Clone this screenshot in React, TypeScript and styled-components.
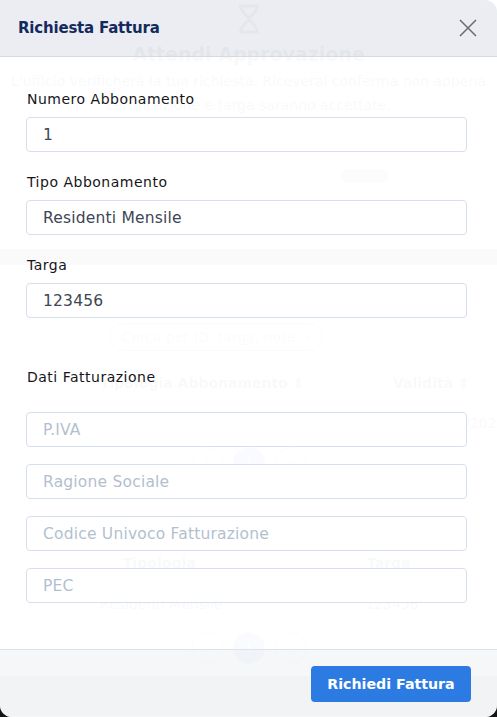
import React from 'react';
import styled, { createGlobalStyle } from 'styled-components';

const Global = createGlobalStyle`
  html, body { margin: 0; padding: 0; }
  body {
    background: linear-gradient(#ffffff 0 50%, #141414 50% 100%);
    font-family: "DejaVu Sans", "Noto Sans", sans-serif;
  }
  * { box-sizing: border-box; }
`;

const Shell = styled.div`
  position: relative;
  width: 497px;
  height: 717px;
  overflow: hidden;
  border-radius: 0 12px 12px 12px;
  background: #ffffff;
`;

/* ---------- faint page behind the translucent dialog ---------- */
const GhostPage = styled.div`
  position: absolute;
  inset: 0;
  display: flex;
  flex-direction: column;
  align-items: center;
  color: #1f2430;
  font-size: 14px;
  opacity: 0.5;
`;

const GhostIcon = styled.svg`
  margin-top: 4px;
  width: 26px;
  height: 30px;
`;

const GhostTitle = styled.div`
  margin-top: 7px;
  font-size: 19px;
  font-weight: 700;
  line-height: 26px;
`;

const GhostText = styled.div`
  width: 560px;
  text-align: center;
  line-height: 24px;
  margin-top: 2px;
`;

const GhostChip = styled.div`
  align-self: flex-end;
  margin: 52px 108px 0 0;
  width: 48px;
  height: 14px;
  border-radius: 7px;
  background: #8a8f99;
`;

const GhostBand = styled.div<{ $h: number; $top: number; $tone: string }>`
  align-self: stretch;
  height: ${(p) => p.$h}px;
  margin-top: ${(p) => p.$top}px;
  background: ${(p) => p.$tone};
`;

const GhostSearch = styled.div`
  margin-top: 58px;
  margin-right: 66px;
  width: 214px;
  height: 28px;
  border: 1px solid #6b7080;
  border-radius: 14px;
  display: flex;
  align-items: center;
  justify-content: space-between;
  padding: 0 10px 0 12px;
  color: #6b7080;
`;

const GhostRow = styled.div<{ $cols: string; $top: number; $bold?: boolean }>`
  align-self: stretch;
  display: grid;
  grid-template-columns: ${(p) => p.$cols};
  margin-top: ${(p) => p.$top}px;
  line-height: 20px;
  font-weight: ${(p) => (p.$bold ? 700 : 400)};
  white-space: nowrap;
  overflow: hidden;
`;

const GhostPager = styled.div<{ $top: number }>`
  margin-top: ${(p) => p.$top}px;
  display: flex;
  gap: 10px;
`;

const GhostDot = styled.div<{ $active?: boolean }>`
  width: 32px;
  height: 32px;
  border-radius: 50%;
  border: 1px solid #8a8f99;
  background: ${(p) => (p.$active ? '#2b6fd6' : 'transparent')};
  color: ${(p) => (p.$active ? '#fff' : '#555')};
  display: flex;
  align-items: center;
  justify-content: center;
  font-size: 12px;
`;

/* ---------- dialog ---------- */
const Dialog = styled.div`
  position: absolute;
  inset: 0;
  display: flex;
  flex-direction: column;
`;

const Header = styled.div`
  height: 57px;
  flex-shrink: 0;
  display: flex;
  align-items: center;
  justify-content: space-between;
  padding: 0 19px 0 18px;
  background: rgba(234, 236, 241, 0.93);
  border-bottom: 1px solid #d6d9e1;
`;

const Title = styled.h2`
  margin: 0;
  font-size: 15px;
  font-weight: 700;
  color: #152a5c;
  letter-spacing: -0.2px;
`;

const CloseButton = styled.button`
  border: 0;
  background: transparent;
  padding: 0;
  width: 20px;
  height: 20px;
  display: flex;
  align-items: center;
  justify-content: center;
  color: #6f6f72;
  cursor: pointer;
`;

const Body = styled.div`
  flex: 1;
  display: flex;
  flex-direction: column;
  padding: 32px 30px 0 26px;
  background: rgba(255, 255, 255, 0.94);
`;

const Fields = styled.div<{ $gap: number }>`
  display: flex;
  flex-direction: column;
  gap: ${(p) => p.$gap}px;
`;

const Field = styled.div`
  display: flex;
  flex-direction: column;
`;

const Label = styled.label<{ $space: number; $top?: number }>`
  margin: ${(p) => p.$top ?? 0}px 0 ${(p) => p.$space}px 1px;
  font-size: 14px;
  font-weight: 500;
  letter-spacing: 0.5px;
  line-height: 20px;
  color: #161618;
`;

const Input = styled.input`
  height: 35px;
  width: 100%;
  border: 1px solid #d6e0ec;
  border-radius: 4px;
  padding: 0 16px;
  font-family: inherit;
  font-size: 15.5px;
  letter-spacing: 0.2px;
  color: #3d4654;
  background: #ffffff;
  outline: none;
  &::placeholder {
    color: #b3bfcf;
  }
`;

const Footer = styled.div`
  flex-shrink: 0;
  display: flex;
  justify-content: flex-end;
  padding: 16px 26px 15px;
  background: rgba(245, 246, 248, 0.94);
  border-top: 1px solid #e0e2e7;
`;

const PrimaryButton = styled.button`
  width: 160px;
  height: 36px;
  border: 0;
  border-radius: 4px;
  background: #2c7be3;
  color: #ffffff;
  font-family: inherit;
  font-size: 14.2px;
  font-weight: 600;
  cursor: pointer;
`;

export default function App() {
  return (
    <>
      <Global />
      <Shell>
        <GhostPage aria-hidden>
          <GhostIcon viewBox="0 0 26 30">
            <path d="M3 2h20M3 28h20M5 2c0 8 8 10 8 13s-8 5-8 13M21 2c0 8-8 10-8 13s8 5 8 13" fill="none" stroke="#444" strokeWidth="3" />
          </GhostIcon>
          <GhostTitle>Attendi Approvazione</GhostTitle>
          <GhostText>
            L'ufficio verificherà la tua richiesta. Riceverai conferma non appena certificazione e targa saranno accettate.
          </GhostText>
          <GhostChip />
          <GhostBand $h={16} $top={66} $tone="#5d616a" />
          <GhostSearch>
            <span>Cerca per ID, targa, note</span>
            <span>⌕</span>
          </GhostSearch>
          <GhostRow $cols="100px 293px 1fr" $top={22} $bold>
            <span />
            <span>Tipologia Abbonamento ⇕</span>
            <span>Validità ⇕</span>
          </GhostRow>
          <GhostRow $cols="465px 32px" $top={20}>
            <span />
            <span>/2025</span>
          </GhostRow>
          <GhostPager $top={14}>
            <GhostDot>‹</GhostDot>
            <GhostDot $active>1</GhostDot>
            <GhostDot>›</GhostDot>
          </GhostPager>
          <GhostRow $cols="123px 244px 1fr" $top={74} $bold>
            <span />
            <span>Tipologia</span>
            <span>Targa</span>
          </GhostRow>
          <GhostRow $cols="100px 265px 1fr" $top={21}>
            <span />
            <span>Residenti Mensile</span>
            <span>123456</span>
          </GhostRow>
          <GhostPager $top={18}>
            <GhostDot>‹</GhostDot>
            <GhostDot $active>1</GhostDot>
            <GhostDot>›</GhostDot>
          </GhostPager>
          <GhostBand $h={40} $top={12} $tone="#6f737c" />
        </GhostPage>

        <Dialog role="dialog">
          <Header>
            <Title>Richiesta Fattura</Title>
            <CloseButton aria-label="Chiudi">
              <svg width="18" height="18" viewBox="0 0 18 18">
                <path d="M1 1l16 16M17 1L1 17" stroke="currentColor" strokeWidth="1.6" fill="none" />
              </svg>
            </CloseButton>
          </Header>
          <Body>
            <Fields $gap={20}>
              <Field>
                <Label $space={8}>Numero Abbonamento</Label>
                <Input defaultValue="1" readOnly />
              </Field>
              <Field>
                <Label $space={8}>Tipo Abbonamento</Label>
                <Input defaultValue="Residenti Mensile" readOnly />
              </Field>
              <Field>
                <Label $space={8}>Targa</Label>
                <Input defaultValue="123456" readOnly />
              </Field>
            </Fields>
            <Label $space={25} $top={49}>Dati Fatturazione</Label>
            <Fields $gap={17}>
              <Input placeholder="P.IVA" />
              <Input placeholder="Ragione Sociale" />
              <Input placeholder="Codice Univoco Fatturazione" />
              <Input placeholder="PEC" />
            </Fields>
          </Body>
          <Footer>
            <PrimaryButton>Richiedi Fattura</PrimaryButton>
          </Footer>
        </Dialog>
      </Shell>
    </>
  );
}
